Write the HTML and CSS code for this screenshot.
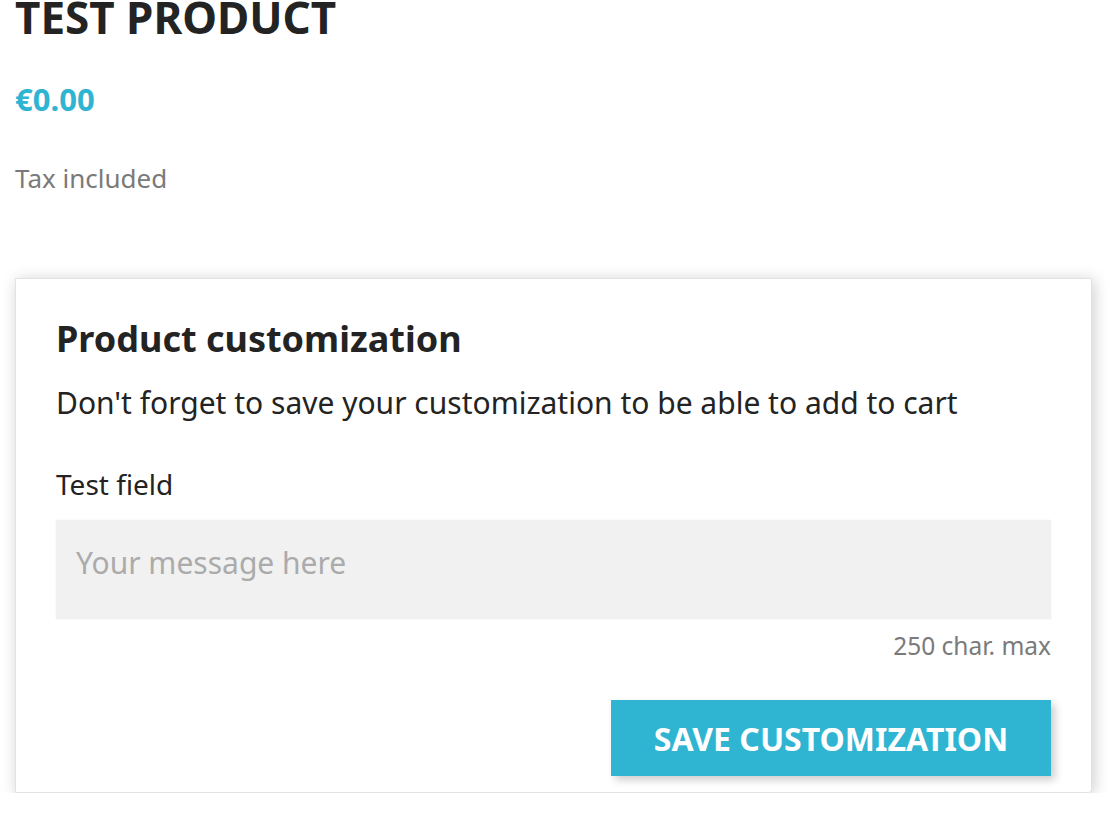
FILE: index.html
```html
<!DOCTYPE html>
<html lang="en">
<head>
<meta charset="utf-8">
<title>Test product</title>
<link rel="stylesheet" href="styles.css">
</head>
<body>
<main class="page">
  <h1 class="product-title">TEST PRODUCT</h1>
  <div class="product-price">€0.00</div>
  <div class="tax-label">Tax included</div>

  <section class="card">
    <h3 class="card-title">Product customization</h3>
    <p class="card-desc">Don't forget to save your customization to be able to add to cart</p>
    <label class="field-label" for="msg">Test field</label>
    <textarea id="msg" class="product-message" placeholder="Your message here"></textarea>
    <small class="char-max">250 char. max</small>
    <div class="actions">
      <button class="btn-save" type="button">Save Customization</button>
    </div>
  </section>
</main>
</body>
</html>
```
FILE: styles.css
```css
html, body {
  margin: 0;
  padding: 0;
  background: #ffffff;
}

body {
  font-family: "Noto Sans", "Open Sans", sans-serif;
  color: #232323;
}

.page {
  padding: 0 26px 0 15px;
}

.product-title {
  margin: 0;
  font-size: 44px;
  line-height: 34px;
  font-weight: 700;
  color: #232323;
}

.product-price {
  margin-top: 45px;
  font-size: 31px;
  line-height: 40px;
  font-weight: 700;
  color: #2fb5d2;
}

.tax-label {
  margin-top: 41px;
  font-size: 26px;
  line-height: 36px;
  color: #7a7a7a;
}

.card {
  margin-top: 82px;
  border: 1px solid #e2e2e2;
  box-shadow: 2px 2px 16px 0 rgba(0, 0, 0, 0.2);
  border-radius: 0 0 4px 0;
  padding: 40px 40px 16px 40px;
  display: flex;
  flex-direction: column;
  background: #fff;
}

.card-title {
  margin: 0;
  font-size: 36px;
  line-height: 40px;
  font-weight: 700;
  color: #232323;
}

.card-desc {
  margin: 24px 0 0 0;
  font-size: 30px;
  line-height: 40px;
  color: #232323;
}

.field-label {
  margin-top: 41px;
  font-size: 28px;
  line-height: 40px;
  color: #232323;
}

.product-message {
  margin-top: 16px;
  box-sizing: border-box;
  width: 100%;
  height: 99px;
  border: none;
  outline: none;
  resize: none;
  background: #f1f1f1;
  padding: 23px 20px 17px 20px;
  font-family: "Noto Sans", "Open Sans", sans-serif;
  font-size: 30px;
  line-height: 40px;
  color: #232323;
  box-shadow: 0 0 2px rgba(0, 0, 0, 0.06);
}

.product-message::placeholder {
  color: #ababab;
  opacity: 1;
}

.char-max {
  margin-top: 9px;
  align-self: flex-end;
  font-size: 24.5px;
  line-height: 36px;
  color: #7a7a7a;
}

.actions {
  margin-top: 36px;
  display: flex;
  justify-content: flex-end;
}

.btn-save {
  width: 440px;
  height: 76px;
  border: none;
  background: #2fb5d2;
  color: #ffffff;
  font-family: "Noto Sans", "Open Sans", sans-serif;
  font-size: 32px;
  font-weight: 700;
  text-transform: uppercase;
  box-shadow: 4px 4px 8px 0 rgba(0, 0, 0, 0.2);
  padding: 0;
  cursor: pointer;
}
```
